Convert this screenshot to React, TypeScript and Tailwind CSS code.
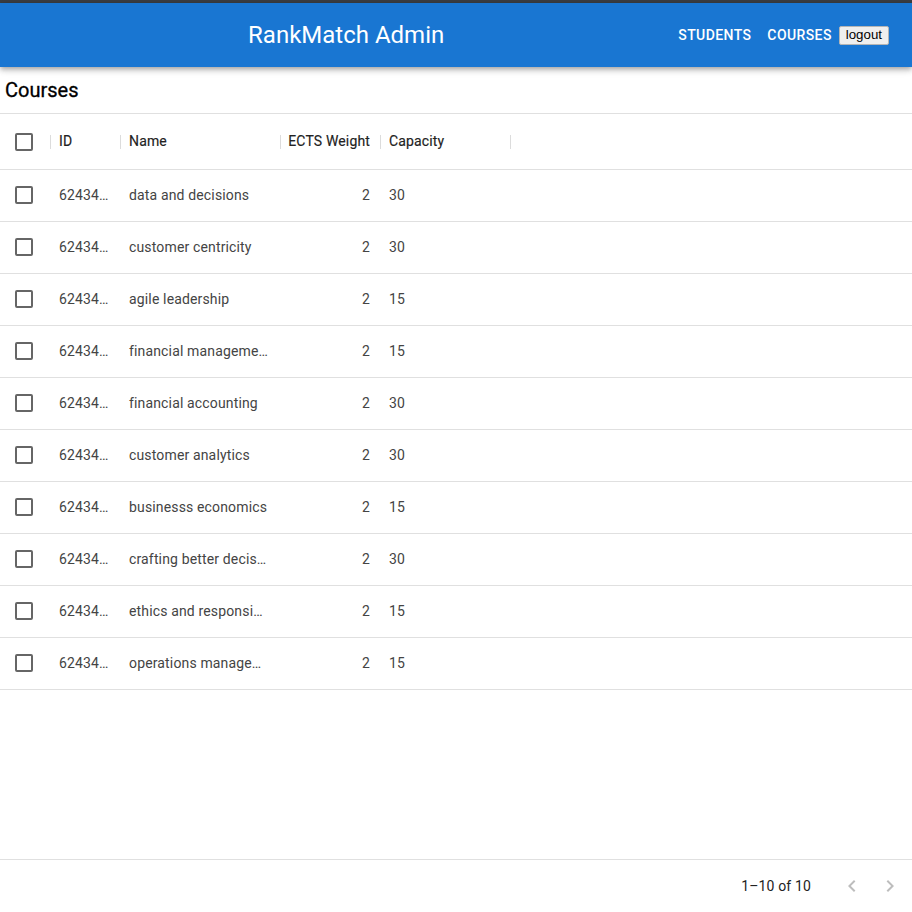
import React from 'react';

const courses = [
  { id: '62434a1f9c2e4b0012a1b001', name: 'data and decisions', ects: 2, capacity: 30 },
  { id: '62434a1f9c2e4b0012a1b002', name: 'customer centricity', ects: 2, capacity: 30 },
  { id: '62434a1f9c2e4b0012a1b003', name: 'agile leadership', ects: 2, capacity: 15 },
  { id: '62434a1f9c2e4b0012a1b004', name: 'financial management', ects: 2, capacity: 15 },
  { id: '62434a1f9c2e4b0012a1b005', name: 'financial accounting', ects: 2, capacity: 30 },
  { id: '62434a1f9c2e4b0012a1b006', name: 'customer analytics', ects: 2, capacity: 30 },
  { id: '62434a1f9c2e4b0012a1b007', name: 'businesss economics', ects: 2, capacity: 15 },
  { id: '62434a1f9c2e4b0012a1b008', name: 'crafting better decisions', ects: 2, capacity: 30 },
  { id: '62434a1f9c2e4b0012a1b009', name: 'ethics and responsibility', ects: 2, capacity: 15 },
  { id: '62434a1f9c2e4b0012a1b010', name: 'operations management', ects: 2, capacity: 15 },
];

const Checkbox = () => (
  <div className="w-[50px] shrink-0 flex items-center pl-[15px]">
    <span className="block w-[18px] h-[18px] rounded-[2px] border-2 border-[#666]" />
  </div>
);

const Separator = () => (
  <span className="absolute right-[-1px] top-1/2 -translate-y-1/2 w-px h-[14px] bg-[#dcdcdc]" />
);

const Chevron = ({ d }: { d: string }) => (
  <svg viewBox="0 0 24 24" className="w-6 h-6 fill-[#bdbdbd]">
    <path d={d} />
  </svg>
);

export default function App() {
  return (
    <div className="h-[912px] flex flex-col bg-white font-['Roboto',sans-serif] overflow-hidden">
      <div className="h-[3px] bg-[#3a3d42]" />
      <header className="relative z-10 h-[64px] bg-[#1976d2] flex items-center pl-6 pr-[23px] shadow-[0px_2px_4px_-1px_rgba(0,0,0,0.2),0px_4px_5px_0px_rgba(0,0,0,0.14),0px_1px_10px_0px_rgba(0,0,0,0.12)]">
        <h1 className="flex-1 text-center text-white text-[24px] font-normal leading-none pr-[3px]">RankMatch Admin</h1>
        <nav className="flex items-center">
          <button className="pl-[7px] pr-2 py-[6px] text-white text-[14px] font-medium uppercase tracking-[0.4px] leading-[24px]">Students</button>
          <button className="px-2 py-[6px] text-white text-[14px] font-medium uppercase tracking-[0.4px] leading-[24px]">Courses</button>
          <button className="ml-[-1px] px-[6px] h-[19px] bg-[#efefef] border border-[#b5b5b5] rounded-[2px] text-[13.3px] leading-none text-black font-['Liberation_Sans',sans-serif]">logout</button>
        </nav>
      </header>

      <div className="h-[46px] flex items-center pl-[5px]">
        <h2 className="text-[20px] font-normal text-black leading-none [-webkit-text-stroke:0.3px_#000]">Courses</h2>
      </div>

      <div className="flex-1 flex flex-col border-t border-[#e0e0e0] text-[14px] tracking-[0.15px]">
        <div className="h-[56px] flex items-center border-b border-[#e0e0e0] font-normal text-[#222] whitespace-nowrap [-webkit-text-stroke:0.15px_#222]">
          <div className="relative h-full flex">
            <Checkbox />
            <Separator />
          </div>
          <div className="relative w-[70px] h-full flex items-center px-[9px]">ID<Separator /></div>
          <div className="relative w-[160px] h-full flex items-center px-[9px]">Name<Separator /></div>
          <div className="relative w-[100px] h-full flex items-center justify-end px-[10px]">ECTS Weight<Separator /></div>
          <div className="relative w-[130px] h-full flex items-center px-[9px]">Capacity<Separator /></div>
        </div>

        {courses.map((c) => (
          <div key={c.id} className="h-[52px] flex items-center border-b border-[#e0e0e0] text-[#444] pb-[1px]">
            <Checkbox />
            <div className="w-[70px] pl-[9px] pr-[10px] truncate">{c.id}</div>
            <div className="w-[160px] pl-[9px] pr-[12px] truncate">{c.name}</div>
            <div className="w-[100px] px-[10px] text-right">{c.ects}</div>
            <div className="w-[130px] px-[9px]">{c.capacity}</div>
          </div>
        ))}

        <div className="flex-1" />

        <div className="h-[53px] border-t border-[#e0e0e0] flex items-center justify-end pr-[10px] text-[#222]">
          <span className="mr-[29px]">1–10 of 10</span>
          <div className="flex items-center gap-[14px]">
            <Chevron d="M15.41 16.59 10.83 12l4.58-4.59L14 6l-6 6 6 6 1.41-1.41z" />
            <Chevron d="M8.59 16.59 13.17 12 8.59 7.41 10 6l6 6-6 6-1.41-1.41z" />
          </div>
        </div>
      </div>
    </div>
  );
}
